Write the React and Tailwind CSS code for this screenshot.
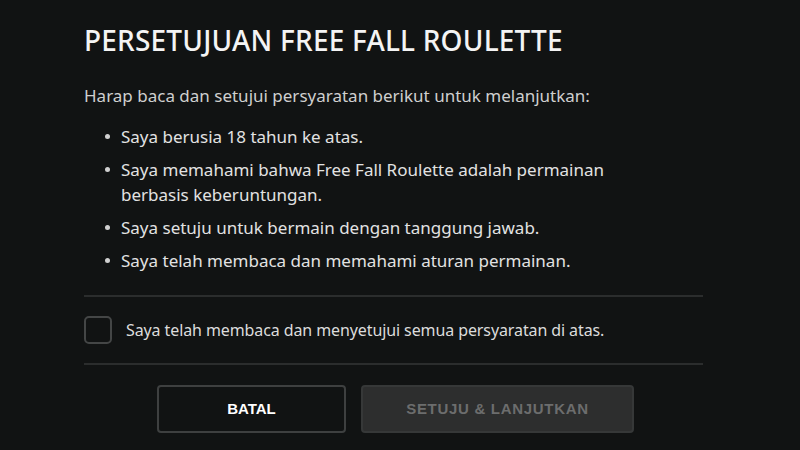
export default function App() {
  const items = [
    "Saya berusia 18 tahun ke atas.",
    "Saya memahami bahwa Free Fall Roulette adalah permainan berbasis keberuntungan.",
    "Saya setuju untuk bermain dengan tanggung jawab.",
    "Saya telah membaca dan memahami aturan permainan.",
  ];
  return (
    <div
      className="w-[800px] h-[450px] bg-[#111313] overflow-hidden text-[#e6e6e6]"
      style={{ fontFamily: '"Noto Sans", "Open Sans", sans-serif' }}
    >
      <div className="ml-[84px] w-[619px] pt-[20px]">
        <h1 className="text-[28px] leading-[40px] font-medium text-[#f4f4f4] tracking-[0.2px]">
          PERSETUJUAN FREE FALL ROULETTE
        </h1>
        <p className="mt-[23px] text-[17px] leading-[26px] text-[#cfcfcf]">
          Harap baca dan setujui persyaratan berikut untuk melanjutkan:
        </p>
        <ul className="mt-[15px] flex flex-col gap-[8px] pl-[21px]">
          {items.map((t) => (
            <li key={t} className="flex items-start text-[17px] leading-[25px] text-[#e2e2e2]">
              <span className="mt-[10px] w-[5px] h-[5px] rounded-full bg-[#d0d0d0] shrink-0" />
              <span className="ml-[11px] w-[500px]">{t}</span>
            </li>
          ))}
        </ul>
        <div className="mt-[22px] h-[2px] bg-[#2b2d2d]" />
        <div className="flex items-center h-[66px]">
          <div className="w-[28px] h-[28px] rounded-[5px] border-2 border-[#444646] shrink-0" />
          <span className="ml-[14px] text-[16px] tracking-[-0.1px] text-[#dcdcdc]">
            Saya telah membaca dan menyetujui semua persyaratan di atas.
          </span>
        </div>
        <div className="h-[2px] bg-[#2b2d2d]" />
        <div
          className="mt-[20px] flex justify-center gap-[15px] pl-[4px]"
          style={{ fontFamily: '"Liberation Sans", Arial, sans-serif' }}
        >
          <button
            className="w-[189px] h-[48px] rounded-[4px] border-2 border-[#3e4040] bg-[#111313] text-white text-[15px] font-bold"
            style={{ fontFamily: '"Liberation Sans Narrow", "Arial Narrow", "Liberation Sans", sans-serif' }}
          >
            BATAL
          </button>
          <button className="w-[273px] h-[48px] rounded-[4px] border-2 border-[#363838] bg-[#2d2e2e] text-[#6c6d6d] text-[15px] font-bold tracking-[0.7px]">
            SETUJU &amp; LANJUTKAN
          </button>
        </div>
      </div>
    </div>
  );
}
